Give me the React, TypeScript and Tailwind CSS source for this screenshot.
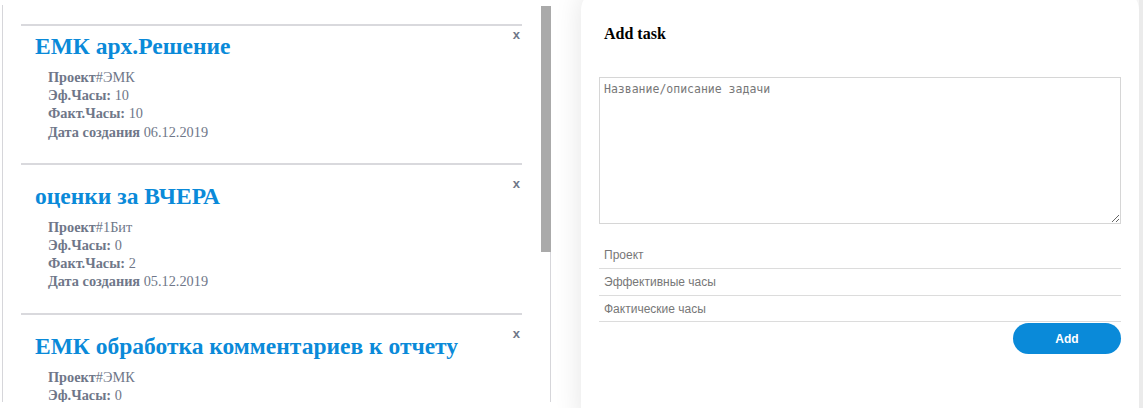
import { useState } from "react";

type Task = {
  title: string;
  project: string;
  eff: string;
  fact: string;
  date: string;
};

const tasks: Task[] = [
  { title: "ЕМК арх.Решение", project: "ЭМК", eff: "10", fact: "10", date: "06.12.2019" },
  { title: "оценки за ВЧЕРА", project: "1Бит", eff: "0", fact: "2", date: "05.12.2019" },
  { title: "ЕМК обработка комментариев к отчету", project: "ЭМК", eff: "0", fact: "4", date: "05.12.2019" },
];

const TaskCard = ({ task, first }: { task: Task; first: boolean }) => {
  return (
    <div
      className={
        first
          ? "relative border-t-2 border-[#d9d9dd] pt-[7px] pb-[22px]"
          : "relative border-t-2 border-[#d9d9dd] pt-[18px] pb-[22px]"
      }
    >
      <button
        className={
          first
            ? "absolute right-[2px] top-[2px] text-[13px] leading-none font-bold text-[#707889] font-['Liberation_Sans',sans-serif]"
            : "absolute right-[2px] top-[12px] text-[13px] leading-none font-bold text-[#707889] font-['Liberation_Sans',sans-serif]"
        }
      >
        x
      </button>
      <h2 className="pl-[14px] text-[23.5px] leading-[26px] font-bold text-[#0a8ad9]">{task.title}</h2>
      <div className="mt-[9px] pl-[27px] text-[14.3px] leading-[18.2px] text-[#6f7789]">
        <div>
          <span className="font-bold">Проект</span>#{task.project}
        </div>
        <div>
          <span className="font-bold">Эф.Часы:</span> {task.eff}
        </div>
        <div>
          <span className="font-bold">Факт.Часы:</span> {task.fact}
        </div>
        <div>
          <span className="font-bold">Дата создания</span> {task.date}
        </div>
      </div>
    </div>
  );
};

export default function App() {
  const [text, setText] = useState("");

  return (
    <div className="flex h-[408px] w-[1143px] overflow-hidden bg-white font-['Liberation_Serif',serif]">
      {/* task list */}
      <div className="ml-[2px] mt-[5px] flex h-[397px] w-[549px] border-l border-[#d6d6da]">
        <div className="flex-1 overflow-hidden pt-[19px] pl-[18px] pr-[19px]">
          {tasks.map((t, i) => (
            <TaskCard key={i} task={t} first={i === 0} />
          ))}
        </div>
        <div className="flex w-[10px] flex-col">
          <div className="mt-[1px] h-[246px] bg-[#aaaaaa]"></div>
          <div className="flex-1 border-r border-[#d6d6da]"></div>
        </div>
      </div>

      {/* add task panel */}
      <div className="ml-[30px] -mt-[10px] flex h-[440px] flex-1 flex-col rounded-[20px] bg-white pt-[34px] pl-[18px] pr-[18px] shadow-[0_0_28px_rgba(0,0,0,0.11)]">
        <h3 className="pl-[5px] text-[16px] leading-[20px] font-bold text-black">Add task</h3>
        <textarea
          value={text}
          onChange={(e) => setText(e.target.value)}
          placeholder="Название/описание задачи"
          className="mt-[33px] h-[147px] w-full resize-y border border-[#d6d6d6] px-[4px] py-[4px] text-[11.5px] leading-[14px] font-['DejaVu_Sans_Mono',monospace] text-[#333] outline-none placeholder:text-[#777]"
        />
        <div className="mt-[18px] flex flex-col font-['Liberation_Sans',sans-serif]">
          <input
            placeholder="Проект"
            className="h-[27px] border-b border-[#dcdcdc] px-[5px] text-[12px] outline-none placeholder:text-[#777]"
          />
          <input
            placeholder="Эффективные часы"
            className="h-[27px] border-b border-[#dcdcdc] px-[5px] text-[12px] outline-none placeholder:text-[#777]"
          />
          <input
            placeholder="Фактические часы"
            className="h-[26px] border-b border-[#dcdcdc] px-[5px] text-[12px] outline-none placeholder:text-[#777]"
          />
          <button className="mt-[1px] h-[31px] w-[108px] self-end rounded-full bg-[#0a8ad9] text-[12px] font-bold text-white">
            Add
          </button>
        </div>
      </div>
      <div className="w-[4px] bg-[#ebebeb]"></div>
    </div>
  );
}
